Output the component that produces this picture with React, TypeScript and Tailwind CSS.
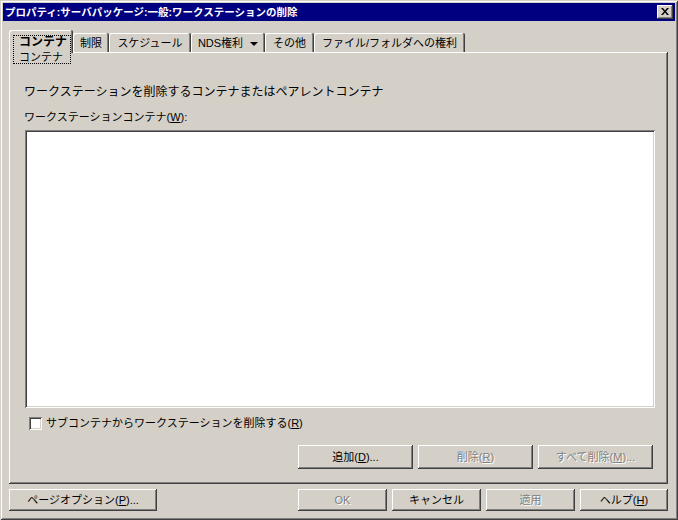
import React from "react";

const raised =
  "shadow-[inset_-1px_-1px_#404040,inset_1px_1px_#fff,inset_-2px_-2px_#808080]";
const sunken =
  "shadow-[inset_1px_1px_#808080,inset_-1px_-1px_#fff,inset_2px_2px_#404040,inset_-2px_-2px_#d4d0c8]";

function Btn({
  label,
  mn,
  after = "",
  disabled = false,
  className = "",
}: {
  label: string;
  mn?: string;
  after?: string;
  disabled?: boolean;
  className?: string;
}) {
  return (
    <div
      className={`flex items-center justify-center bg-[#d4d0c8] text-[11px] leading-none ${raised} ${
        disabled ? "text-[#808080] [text-shadow:1px_1px_0_#fff]" : "text-black"
      } ${className}`}
    >
      <span>
        {label}
        {mn && (
          <>
            (<u>{mn}</u>)
          </>
        )}
        {after}
      </span>
    </div>
  );
}

function Tab({ w, children }: { w: string; children: React.ReactNode }) {
  return (
    <div
      className={`mt-[3px] flex h-[19px] items-center justify-center rounded-t-[2px] bg-[#d4d0c8] pt-[1px] text-[11px] leading-none shadow-[inset_-1px_0_#404040,inset_1px_1px_#fff,inset_-2px_0_#808080] ${w}`}
    >
      {children}
    </div>
  );
}

export default function App() {
  return (
    <div className="flex h-[520px] w-[678px] flex-col bg-[#d4d0c8] p-[3px] font-[family-name:'Liberation_Sans','Noto_Sans_CJK_JP',sans-serif] text-black shadow-[inset_1px_1px_#d4d0c8,inset_-1px_-1px_#404040,inset_2px_2px_#fff,inset_-2px_-2px_#808080]">
      {/* title bar */}
      <div className="flex h-[18px] items-center justify-between bg-[#000080] pl-[2px] pr-[2px]">
        <span className="text-[10.5px] font-bold leading-[18px] text-white">
          プロパティ:サーバパッケージ:一般:ワークステーションの削除
        </span>
        <div className={`flex h-[14px] w-[16px] items-center justify-center bg-[#d4d0c8] ${raised}`}>
          <svg width="8" height="7" viewBox="0 0 8 7" className="mb-[1px]">
            <path d="M0 0h2l2 2.5L6 0h2L5 3.5 8 7H6L4 4.5 2 7H0l3-3.5z" fill="#000" />
          </svg>
        </div>
      </div>

      {/* body */}
      <div className="flex flex-1 flex-col pl-[6px] pr-[7px] pt-[9px]">
        {/* tabs */}
        <div className="relative z-10 flex h-[22px] items-start">
          <div className="relative h-[23px] w-[64px] rounded-t-[2px] bg-[#d4d0c8] shadow-[inset_-1px_0_#404040,inset_1px_1px_#fff,inset_-2px_0_#808080]">
            <div className="absolute left-[4px] top-[5px] h-[29px] w-[58px] border border-dotted border-black" />
            <div className="absolute left-[10px] top-[5px] flex flex-col">
              <span className="text-[12px] font-bold leading-[15px]">コンテナ</span>
              <span className="text-[11px] leading-[15px]">コンテナ</span>
            </div>
          </div>
          <Tab w="w-[36px]">制限</Tab>
          <Tab w="w-[82px]">スケジュール</Tab>
          <Tab w="w-[74px]">
            <span>NDS権利</span>
            <svg width="8" height="4" viewBox="0 0 8 4" className="ml-[7px] mt-[1px]">
              <path d="M0 0h8L4 4z" fill="#000" />
            </svg>
          </Tab>
          <Tab w="w-[49px]">その他</Tab>
          <Tab w="w-[151px]">ファイル/フォルダへの権利</Tab>
        </div>

        {/* panel */}
        <div className={`flex h-[432px] w-[659px] flex-col bg-[#d4d0c8] ${raised}`}>
          <div className="ml-[15px] mt-[32px] h-[16px] text-[12px] leading-[16px]">
            ワークステーションを削除するコンテナまたはペアレントコンテナ
          </div>
          <div className="ml-[15px] mt-[10px] h-[14px] text-[11px] leading-[14px]">
            ワークステーションコンテナ(<u>W</u>):
          </div>
          <div className={`ml-[16px] mt-[6px] h-[278px] w-[630px] bg-white ${sunken}`} />
          <div className="ml-[20px] mt-[9px] flex h-[13px] items-center">
            <div className={`h-[13px] w-[13px] bg-white ${sunken}`} />
            <span className="ml-[4px] text-[11px] leading-none">
              サブコンテナからワークステーションを削除する(<u>R</u>)
            </span>
          </div>
          <div className="mt-[15px] flex justify-end gap-[5px] pr-[15px]">
            <Btn label="追加" mn="D" after="..." className="h-[24px] w-[115px]" />
            <Btn label="削除" mn="R" disabled className="h-[24px] w-[115px]" />
            <Btn label="すべて削除" mn="M" after="..." disabled className="h-[24px] w-[115px]" />
          </div>
        </div>

        {/* bottom buttons */}
        <div className="mt-[5px] flex items-center justify-between">
          <Btn label="ページオプション" mn="P" after="..." className="h-[22px] w-[148px]" />
          <div className="flex gap-[5px]">
            <Btn label="OK" disabled className="h-[22px] w-[89px]" />
            <Btn label="キャンセル" className="h-[22px] w-[89px]" />
            <Btn label="適用" disabled className="h-[22px] w-[89px]" />
            <Btn label="ヘルプ" mn="H" className="h-[22px] w-[88px]" />
          </div>
        </div>
      </div>
    </div>
  );
}
